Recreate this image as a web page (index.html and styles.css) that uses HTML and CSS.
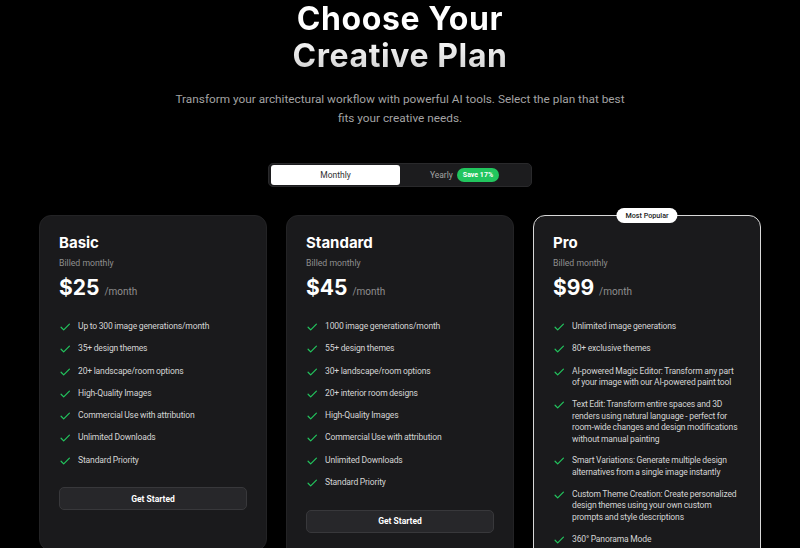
FILE: index.html
```html
<!DOCTYPE html>
<html lang="en">
<head>
  <meta charset="UTF-8">
  <title>Pricing - Choose Your Creative Plan</title>
  <link rel="stylesheet" href="styles.css">
</head>
<body>
  <section class="pricing">
    <header class="intro">
      <h1 class="headline">Choose Your<br>Creative Plan</h1>
      <p class="lead">Transform your architectural workflow with powerful AI tools. Select the plan that best fits your creative needs.</p>
    </header>

    <div class="billing">
      <button class="billing-opt active">Monthly</button>
      <button class="billing-opt">Yearly <span class="save">Save 17%</span></button>
    </div>

    <div class="plans">
      <div class="plan">
        <h2 class="plan-name">Basic</h2>
        <p class="billed">Billed monthly</p>
        <p class="price"><span class="amount">$25</span> <span class="per">/month</span></p>
        <ul class="features">
          <li><svg class="tick" viewBox="0 0 24 24"><path d="M20 6 9 17l-5-5"/></svg><span>Up to 300 image generations/month</span></li>
          <li><svg class="tick" viewBox="0 0 24 24"><path d="M20 6 9 17l-5-5"/></svg><span>35+ design themes</span></li>
          <li><svg class="tick" viewBox="0 0 24 24"><path d="M20 6 9 17l-5-5"/></svg><span>20+ landscape/room options</span></li>
          <li><svg class="tick" viewBox="0 0 24 24"><path d="M20 6 9 17l-5-5"/></svg><span>High-Quality Images</span></li>
          <li><svg class="tick" viewBox="0 0 24 24"><path d="M20 6 9 17l-5-5"/></svg><span>Commercial Use with attribution</span></li>
          <li><svg class="tick" viewBox="0 0 24 24"><path d="M20 6 9 17l-5-5"/></svg><span>Unlimited Downloads</span></li>
          <li><svg class="tick" viewBox="0 0 24 24"><path d="M20 6 9 17l-5-5"/></svg><span>Standard Priority</span></li>
        </ul>
        <button class="cta">Get Started</button>
      </div>

      <div class="plan">
        <h2 class="plan-name">Standard</h2>
        <p class="billed">Billed monthly</p>
        <p class="price"><span class="amount">$45</span> <span class="per">/month</span></p>
        <ul class="features">
          <li><svg class="tick" viewBox="0 0 24 24"><path d="M20 6 9 17l-5-5"/></svg><span>1000 image generations/month</span></li>
          <li><svg class="tick" viewBox="0 0 24 24"><path d="M20 6 9 17l-5-5"/></svg><span>55+ design themes</span></li>
          <li><svg class="tick" viewBox="0 0 24 24"><path d="M20 6 9 17l-5-5"/></svg><span>30+ landscape/room options</span></li>
          <li><svg class="tick" viewBox="0 0 24 24"><path d="M20 6 9 17l-5-5"/></svg><span>20+ interior room designs</span></li>
          <li><svg class="tick" viewBox="0 0 24 24"><path d="M20 6 9 17l-5-5"/></svg><span>High-Quality Images</span></li>
          <li><svg class="tick" viewBox="0 0 24 24"><path d="M20 6 9 17l-5-5"/></svg><span>Commercial Use with attribution</span></li>
          <li><svg class="tick" viewBox="0 0 24 24"><path d="M20 6 9 17l-5-5"/></svg><span>Unlimited Downloads</span></li>
          <li><svg class="tick" viewBox="0 0 24 24"><path d="M20 6 9 17l-5-5"/></svg><span>Standard Priority</span></li>
        </ul>
        <button class="cta">Get Started</button>
      </div>

      <div class="plan popular">
        <span class="badge">Most Popular</span>
        <h2 class="plan-name">Pro</h2>
        <p class="billed">Billed monthly</p>
        <p class="price"><span class="amount">$99</span> <span class="per">/month</span></p>
        <ul class="features">
          <li><svg class="tick" viewBox="0 0 24 24"><path d="M20 6 9 17l-5-5"/></svg><span>Unlimited image generations</span></li>
          <li><svg class="tick" viewBox="0 0 24 24"><path d="M20 6 9 17l-5-5"/></svg><span>80+ exclusive themes</span></li>
          <li><svg class="tick" viewBox="0 0 24 24"><path d="M20 6 9 17l-5-5"/></svg><span>AI-powered Magic Editor: Transform any part of your image with our AI-powered paint tool</span></li>
          <li><svg class="tick" viewBox="0 0 24 24"><path d="M20 6 9 17l-5-5"/></svg><span>Text Edit: Transform entire spaces and 3D renders using natural language - perfect for room-wide changes and design modifications without manual painting</span></li>
          <li><svg class="tick" viewBox="0 0 24 24"><path d="M20 6 9 17l-5-5"/></svg><span>Smart Variations: Generate multiple design alternatives from a single image instantly</span></li>
          <li><svg class="tick" viewBox="0 0 24 24"><path d="M20 6 9 17l-5-5"/></svg><span>Custom Theme Creation: Create personalized design themes using your own custom prompts and style descriptions</span></li>
          <li><svg class="tick" viewBox="0 0 24 24"><path d="M20 6 9 17l-5-5"/></svg><span>360° Panorama Mode</span></li>
        </ul>
        <button class="cta">Get Started</button>
      </div>
    </div>
  </section>
</body>
</html>
```

FILE: styles.css
```css
body { margin: 0; background: #000; color: #fff; font-family: Roboto, "Liberation Sans", sans-serif; }
.pricing { max-width: 722px; margin: 0 auto; padding-bottom: 40px; }

.intro { text-align: center; }
.headline { margin: 0; font-family: Inter, "Noto Sans", sans-serif; font-size: 32px; line-height: 37px; font-weight: 700; letter-spacing: 0.6px;
  background: linear-gradient(180deg, #ffffff 45%, #d0d0d0 100%); -webkit-background-clip: text; background-clip: text; color: transparent; }
.lead { width: 460px; margin: 16px auto 0; font-size: 11.8px; line-height: 19px; color: #a3a3a3; }

.billing { display: flex; width: 258px; margin: 35px auto 0; padding: 1px 2px; background: #1c1c1e; border: 1px solid #29292b; border-radius: 5px; }
.billing-opt { flex: 1; height: 20px; border: 0; border-radius: 3px; background: transparent; font-family: inherit; font-size: 8.5px; color: #a3a3a3;
  display: flex; align-items: center; justify-content: center; gap: 4px; padding: 0; }
.billing-opt.active { background: #fff; color: #333; }
.save { background: #22c55e; color: #fff; font-weight: 700; font-size: 7px; padding: 3px 6px; border-radius: 8px; }

.plans { display: grid; grid-template-columns: repeat(3, 1fr); gap: 19px; margin-top: 28px; align-items: start; }
.plan { position: relative; background: #1a1a1c; border: 1px solid #232325; border-radius: 12px; padding: 19px 19px 40px; }
.plan.popular { border-color: #d8d8d8; }
.badge { position: absolute; top: -8px; left: 50%; transform: translateX(-50%); background: #fff; color: #222; font-size: 7.2px; font-weight: 500;
  padding: 3px 9px; border-radius: 8px; white-space: nowrap; }

.plan-name { margin: 0; font-family: Inter, "Noto Sans", sans-serif; font-size: 15px; line-height: 16px; font-weight: 700; }
.billed { margin: 6px 0 0; font-size: 8.7px; line-height: 12px; color: #8f8f8f; }
.price { margin: 7px 0 0; display: flex; align-items: baseline; gap: 5px; height: 24px; }
.amount { font-family: Inter, "Noto Sans", sans-serif; font-size: 21px; line-height: 24px; font-weight: 700; }
.per { font-size: 10px; color: #8f8f8f; }

.features { list-style: none; margin: 21px 0 0; padding: 0; display: flex; flex-direction: column; gap: 9.8px; }
.features li { display: flex; gap: 6.5px; font-size: 8.55px; line-height: 11.7px; letter-spacing: -0.15px; word-spacing: -0.3px; color: #d4d4d4; }
.tick { flex: none; width: 12.5px; height: 12.5px; fill: none; stroke: #22c55e; stroke-width: 2.3; stroke-linecap: round; stroke-linejoin: round; }

.cta { display: block; width: 100%; height: 23px; margin-top: 20px; background: #27272a; border: 1px solid #38383b; border-radius: 5px;
  color: #fff; font-family: inherit; font-size: 8.5px; font-weight: 700; }
```
